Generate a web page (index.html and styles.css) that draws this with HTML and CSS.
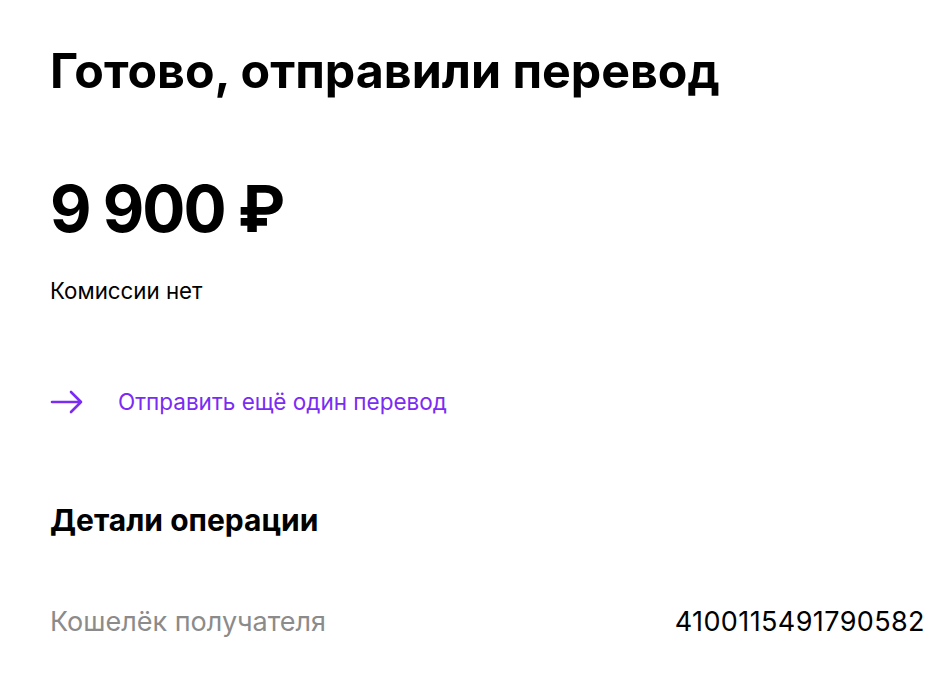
FILE: index.html
```html
<!DOCTYPE html>
<html lang="ru">
<head>
<meta charset="utf-8">
<link rel="stylesheet" href="styles.css">
</head>
<body>
<main class="page">
  <h1 class="title">Готово, отправили перевод</h1>
  <div class="amount">9 900 ₽</div>
  <div class="fee">Комиссии нет</div>
  <a class="again" href="#">
    <svg class="arrow" width="34" height="24" viewBox="0 0 34 24" fill="none" stroke="currentColor" stroke-width="2.6" stroke-linecap="round" stroke-linejoin="round">
      <path d="M2 12H31M21 2L31 12L21 22"/>
    </svg>
    <span>Отправить ещё один перевод</span>
  </a>
  <h2 class="details">Детали операции</h2>
  <div class="row">
    <span class="label">Кошелёк получателя</span>
    <span class="value">4100115491790582</span>
  </div>
</main>
</body>
</html>
```
FILE: styles.css
```css
* { box-sizing: border-box; }
html, body { margin: 0; padding: 0; background: #fff; }
body { font-family: Inter, "Noto Sans", sans-serif; color: #000; }
.page { padding: 41px 16px 0 50px; display: flex; flex-direction: column; }
.title { margin: 0; font-size: 48.3px; font-weight: 700; line-height: 60px; letter-spacing: 0; }
.amount { margin-top: 68px; font-size: 64px; font-weight: 700; line-height: 80px; letter-spacing: -2px; }
.fee { margin-top: 29px; font-size: 22.3px; line-height: 26px; }
.again { margin-top: 83px; display: flex; align-items: center; gap: 34px; color: #7a2cf4; text-decoration: none; font-size: 22.5px; line-height: 30px; }
.arrow { display: block; flex: none; }
.details { margin: 84px 0 0; font-size: 30px; font-weight: 700; line-height: 38px; }
.row { margin-top: 67px; display: flex; justify-content: space-between; align-items: baseline; font-size: 27px; line-height: 32px; }
.label { color: #8b8b8b; }
.value { color: #000; letter-spacing: 0.4px; }
```
